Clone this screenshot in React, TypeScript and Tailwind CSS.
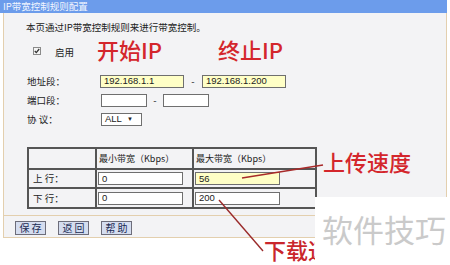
import React from "react";

const cjk = { fontFamily: '"Noto Sans CJK SC", "Noto Sans", sans-serif' };
const arial = { fontFamily: '"Liberation Sans", Arial, sans-serif' };

function Input({ w, value, yellow }: { w: number; value?: string; yellow?: boolean }) {
  return (
    <div
      className={`h-[13px] border border-[#6f6f6f] flex items-center pl-[3px] text-[9.5px] text-[#222] leading-none ${yellow ? "bg-[#ffffc6]" : "bg-white"}`}
      style={{ width: w, ...arial }}
    >
      {value}
    </div>
  );
}

function Btn({ label }: { label: string }) {
  return (
    <div className="h-[14px] w-[31px] bg-[#d5ddef] border border-[#6d6d7a] flex items-center justify-center text-[10px] tracking-[2px] text-[#1c2c55] leading-none pl-[2px]">
      {label}
    </div>
  );
}

export default function App() {
  return (
    <div className="relative w-[450px] h-[265px] bg-white overflow-hidden" style={cjk}>
      <div className="w-[447px]">
        <div className="h-[13px] bg-[#6c9ceb] text-[#f2f6ff] text-[9.5px] leading-[13px] pl-[3px]">
          IP带宽控制规则配置
        </div>
        <div className="ml-[3px] w-[444px] border-x border-b border-[#e3cfae] bg-[#f3f3f5] text-[#222] text-[9.5px]">
          <div className="pt-[8px] pl-[22px] h-[21px] leading-[13px]">本页通过IP带宽控制规则来进行带宽控制。</div>
          <div className="mt-[10px] h-[14px] flex items-center pl-[29px]">
            <svg width="8" height="8" viewBox="0 0 8 8" className="mr-[14px]">
              <rect x="0.5" y="0.5" width="7" height="7" fill="#f4f4f4" stroke="#8a8a8a" />
              <path d="M1.8 4 L3.3 5.6 L6.2 2" stroke="#333" strokeWidth="1.3" fill="none" />
            </svg>
            <span className="leading-none mt-[3px]">启用</span>
          </div>
          <div className="mt-[16px] h-[14px] flex items-center pl-[23px]">
            <span className="w-[73px]">地址段：</span>
            <Input w={84} value="192.168.1.1" yellow />
            <span className="w-[18px] text-center">-</span>
            <Input w={84} value="192.168.1.200" yellow />
          </div>
          <div className="mt-[5px] h-[14px] flex items-center pl-[23px]">
            <span className="w-[74px]">端口段：</span>
            <Input w={46} />
            <span className="w-[16px] text-center">-</span>
            <Input w={46} />
          </div>
          <div className="mt-[5px] h-[14px] flex items-center pl-[23px]">
            <span className="w-[74px]">协 议：</span>
            <div className="h-[13px] w-[41px] border border-[#6f6f6f] bg-white flex items-center pl-[3px] text-[9.5px] leading-none" style={arial}>
              ALL<span className="ml-[5px] text-[6px]">▼</span>
            </div>
          </div>
          <div className="mt-[21px] ml-[23px] w-[290px]">
            <table className="border-collapse border-2 border-[#555] w-[290px] text-[9px]">
              <tbody>
                <tr className="h-[21px]">
                  <td className="border-2 border-[#555] w-[68px]"></td>
                  <td className="border-2 border-[#555] w-[97px] pl-[2px]">最小带宽（Kbps）</td>
                  <td className="border-2 border-[#555] pl-[2px]">最大带宽（Kbps）</td>
                </tr>
                <tr className="h-[19px]">
                  <td className="border-2 border-[#555] pl-[4px] text-[9.5px]">上 行：</td>
                  <td className="border-2 border-[#555] pl-[1px]"><Input w={85} value="0" /></td>
                  <td className="border-2 border-[#555] pl-[1px]"><Input w={85} value="56" yellow /></td>
                </tr>
                <tr className="h-[20px]">
                  <td className="border-2 border-[#555] pl-[4px] text-[9.5px]">下 行：</td>
                  <td className="border-2 border-[#555] pl-[1px]"><Input w={85} value="0" /></td>
                  <td className="border-2 border-[#555] pl-[1px]"><Input w={85} value="200" /></td>
                </tr>
              </tbody>
            </table>
          </div>
          <div className="mt-[6px] h-px bg-[#e3cfae]" />
          <div className="mt-[5px] pb-[2px] flex gap-[12px] pl-[11px]">
            <Btn label="保存" />
            <Btn label="返回" />
            <Btn label="帮助" />
          </div>
        </div>
      </div>

      <svg className="absolute left-0 top-0" width="450" height="265">
        <line x1="242" y1="178" x2="323" y2="165" stroke="#a82a2a" strokeWidth="1.4" />
        <line x1="219" y1="200" x2="263" y2="251" stroke="#9a2a2a" strokeWidth="1.4" />
      </svg>
      <div className="absolute left-[97px] top-[38px] text-[22px] leading-none font-medium text-[#d4262c]">开始IP</div>
      <div className="absolute left-[218px] top-[38px] text-[22px] leading-none font-medium text-[#d4262c]">终止IP</div>
      <div className="absolute left-[323px] top-[150px] text-[22px] leading-none font-medium text-[#d4262c]">上传速度</div>
      <div className="absolute left-[264px] top-[236px] w-[51px] h-[26px] overflow-hidden">
        <div className="mt-[2px] text-[22px] leading-none font-medium text-[#c9262c] whitespace-nowrap">下载速度</div>
      </div>
      <div className="absolute left-[315px] top-[197px] w-[135px] h-[68px] bg-white">
        <div className="mt-[16px] ml-[7px] text-[31px] leading-none text-[#cacaca] whitespace-nowrap">软件技巧</div>
      </div>
    </div>
  );
}
